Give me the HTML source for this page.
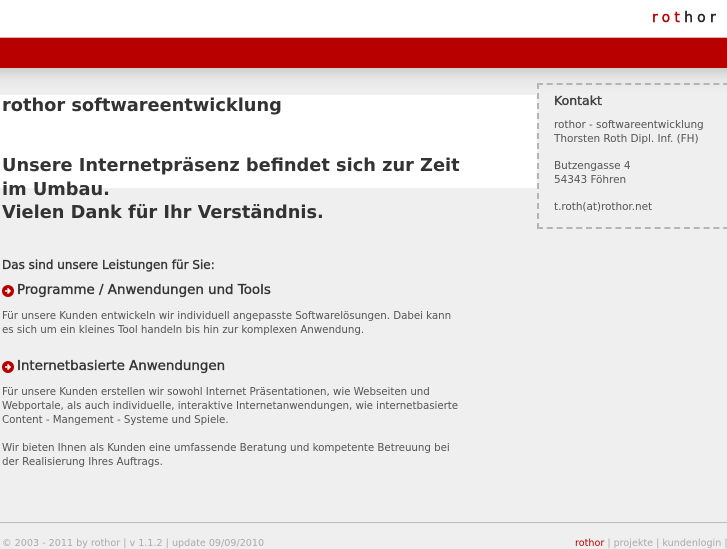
<!DOCTYPE html>
<html><head><meta charset="utf-8"><style>
*{margin:0;padding:0}
body{width:727px;height:545px;overflow:hidden;background:#efefef;font-family:"DejaVu Sans","Liberation Sans",sans-serif;color:#444;position:relative}
.a{position:absolute;white-space:nowrap}
.t{font-size:10.3px;line-height:14px;color:#555;letter-spacing:-0.05px}
.h{font-weight:bold;color:#333}
.m{-webkit-text-stroke:0.35px #333;color:#333}
</style></head><body>
<div class="a" style="left:0;top:0;width:727px;height:38px;background:#fff"></div>
<div class="a" style="left:0;top:37px;width:727px;height:1px;background:#e3b0b0"></div>
<div class="a" style="left:0;top:38px;width:727px;height:30px;background:#b80000"></div>
<div class="a" style="left:0;top:68px;width:727px;height:27px;background:linear-gradient(#cfcfcf,#e6e6e6 40%,#f0f0f0)"></div>
<div class="a" style="left:0;top:95px;width:537px;height:93px;background:#fff"></div>
<div class="a" style="left:652px;top:10px;font-size:14px;letter-spacing:4.2px;color:#222;-webkit-text-stroke:0.4px #222"><span style="color:#b80000;-webkit-text-stroke:0.4px #b80000">rot</span>hor</div>
<div class="a h" style="left:2px;top:95px;font-size:17.8px;line-height:22px">rothor softwareentwicklung</div>
<div class="a h" style="left:2px;top:154px;font-size:17.8px;line-height:23.5px">Unsere Internetpräsenz befindet sich zur Zeit<br>im Umbau.<br>Vielen Dank für Ihr Verständnis.</div>
<div class="a m" style="left:2px;top:258px;font-size:12px">Das sind unsere Leistungen für Sie:</div>
<svg class="a" style="left:2px;top:285px" width="12" height="12" viewBox="0 0 12 12"><circle cx="6" cy="6" r="6" fill="#b80000"/><path d="M3 6h4M5.5 3.5L8 6 5.5 8.5" stroke="#fff" stroke-width="1.6" fill="none"/></svg>
<div class="a m" style="left:17px;top:283px;font-size:13.4px">Programme / Anwendungen und Tools</div>
<div class="a t" style="left:2px;top:309px">Für unsere Kunden entwickeln wir individuell angepasste Softwarelösungen. Dabei kann<br>es sich um ein kleines Tool handeln bis hin zur komplexen Anwendung.</div>
<svg class="a" style="left:2px;top:361px" width="12" height="12" viewBox="0 0 12 12"><circle cx="6" cy="6" r="6" fill="#b80000"/><path d="M3 6h4M5.5 3.5L8 6 5.5 8.5" stroke="#fff" stroke-width="1.6" fill="none"/></svg>
<div class="a m" style="left:17px;top:359px;font-size:13.4px">Internetbasierte Anwendungen</div>
<div class="a t" style="left:2px;top:385px">Für unsere Kunden erstellen wir sowohl Internet Präsentationen, wie Webseiten und<br>Webportale, als auch individuelle, interaktive Internetanwendungen, wie internetbasierte<br>Content - Mangement - Systeme und Spiele.<br><br>Wir bieten Ihnen als Kunden eine umfassende Beratung und kompetente Betreuung bei<br>der Realisierung Ihres Auftrags.</div>
<div class="a" style="left:537px;top:83px;width:200px;height:142px;border-style:dashed;border-width:2px 0 2px 2px;border-color:#b5b5b5"></div>
<div class="a m" style="left:554px;top:93px;font-size:12.5px;color:#444">Kontakt</div>
<div class="a t" style="left:554px;top:119px;font-size:10.5px;line-height:13.7px">rothor - softwareentwicklung<br>Thorsten Roth Dipl. Inf. (FH)<br><br>Butzengasse 4<br>54343 Föhren<br><br>t.roth(at)rothor.net</div>
<div class="a" style="left:0;top:522px;width:727px;height:1px;background:#bbb"></div>
<div class="a" style="left:2px;top:538px;font-size:9.6px;color:#aaa">© 2003 - 2011 by rothor | v 1.1.2 | update 09/09/2010</div>
<div class="a" style="left:575px;top:538px;font-size:9.6px;color:#aaa"><span style="color:#b80000">rothor</span> | projekte | kundenlogin |</div>
</body></html>
